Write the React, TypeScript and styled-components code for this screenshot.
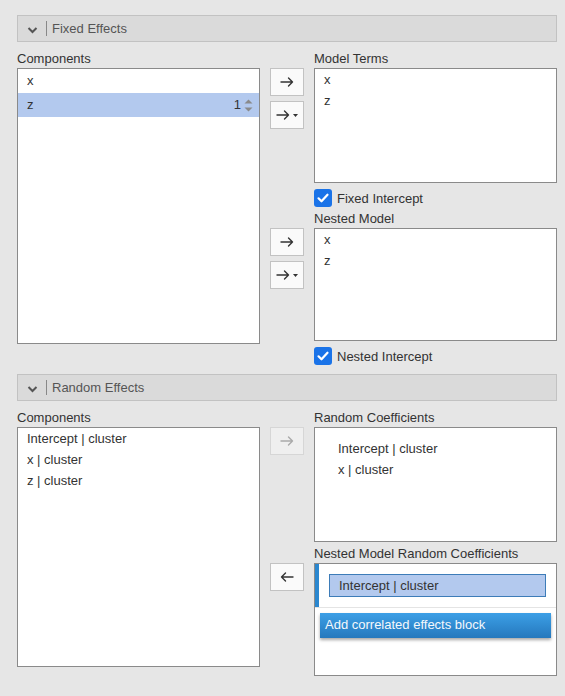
import React from "react";
import styled, { createGlobalStyle } from "styled-components";

const GlobalStyle = createGlobalStyle`
  html, body {
    margin: 0;
    padding: 0;
    background: #e6e6e6;
    font-family: "Liberation Sans", Arial, sans-serif;
    font-size: 13px;
    color: #333;
  }
`;

const Page = styled.div`
  width: 540px;
  padding: 15px 0 0 17px;
`;

const Section = styled.section`
  display: flex;
  flex-direction: column;
  & + & {
    margin-top: 8px;
  }
`;

const SectionHeader = styled.div`
  height: 25px;
  display: flex;
  align-items: center;
  background: #dadada;
  border: 1px solid #c2c2c2;
  color: #555;
  font-size: 13px;
`;

const Chevron = styled.div`
  width: 27px;
  display: flex;
  justify-content: center;
  padding-left: 1px;
  padding-top: 3px;
`;

const Divider = styled.div`
  width: 1px;
  height: 15px;
  background: #888;
  margin-right: 5px;
`;

const Body = styled.div<{ $top: number }>`
  display: grid;
  grid-template-columns: 243px 34px 243px;
  column-gap: 10px;
  padding-top: ${(p) => p.$top}px;
  align-items: start;
`;

const Column = styled.div`
  display: flex;
  flex-direction: column;
`;

const Label = styled.div`
  height: 18px;
  line-height: 18px;
  color: #333;
`;

const ListBox = styled.div<{ $h: number }>`
  height: ${(p) => p.$h}px;
  box-sizing: border-box;
  background: #fff;
  border: 1px solid #8a8a8a;
  display: flex;
  flex-direction: column;
  overflow: hidden;
`;

const Item = styled.div<{ $h?: number; $selected?: boolean }>`
  height: ${(p) => p.$h ?? 21}px;
  line-height: ${(p) => p.$h ?? 21}px;
  padding: 0 9px;
  display: flex;
  align-items: center;
  background: ${(p) => (p.$selected ? "#b3c9ee" : "transparent")};
  color: #333;
`;

const ItemText = styled.span`
  flex: 1;
`;

const Spinner = styled.div`
  display: flex;
  align-items: center;
  gap: 3px;
  margin-right: -3px;
`;

const ButtonStack = styled.div<{ $top: number }>`
  display: flex;
  flex-direction: column;
  gap: 5px;
  margin-top: ${(p) => p.$top}px;
`;

const ArrowButton = styled.button<{ $disabled?: boolean }>`
  width: 34px;
  height: 28px;
  box-sizing: border-box;
  padding: 0;
  display: flex;
  align-items: center;
  justify-content: center;
  gap: 3px;
  background: ${(p) => (p.$disabled ? "#efefef" : "#fafafa")};
  border: 1px solid ${(p) => (p.$disabled ? "#d6d6d6" : "#c2c2c2")};
  color: ${(p) => (p.$disabled ? "#aaa" : "#333")};
  border-radius: 0;
`;

const CheckRow = styled.label`
  height: 20px;
  margin-top: 5px;
  display: flex;
  align-items: center;
  gap: 5px;
  color: #333;
`;

const CheckBox = styled.span`
  width: 18px;
  height: 18px;
  border-radius: 3px;
  background: #1a73e8;
  display: flex;
  align-items: center;
  justify-content: center;
`;

const Block = styled.div<{ $active?: boolean }>`
  padding: 10px;
  border-left: 4px solid ${(p) => (p.$active ? "#2b87cf" : "transparent")};
  display: flex;
  flex-direction: column;
`;

const BlockItem = styled.div<{ $selected?: boolean }>`
  height: 21px;
  line-height: 21px;
  padding: 0 9px;
  box-sizing: border-box;
  color: #333;
  ${(p) =>
    p.$selected &&
    `
    height: 23px;
    line-height: 21px;
    background: #b3c9ee;
    border: 1px solid #3d7cb8;
  `}
`;

const Separator = styled.div`
  height: 1px;
  background: #e4e4e4;
`;

const AddBlockButton = styled.div`
  margin: 5px 5px 0 5px;
  height: 25px;
  line-height: 24px;
  padding: 0 5px;
  color: #f4f8fc;
  background: linear-gradient(#3c9fe6, #2578bd);
  box-shadow: 0 2px 3px rgba(0, 0, 0, 0.35);
`;

const Arrow = ({ left }: { left?: boolean }) => (
  <svg width="14" height="10" viewBox="0 0 14 10" fill="none">
    <path
      d={left ? "M13 5H1.5M5.5 1L1.5 5l4 4" : "M1 5h11.5M8.5 1l4 4-4 4"}
      stroke="currentColor"
      strokeWidth="1.4"
      strokeLinecap="round"
      strokeLinejoin="round"
    />
  </svg>
);

const Caret = () => (
  <svg width="5" height="3" viewBox="0 0 5 3">
    <path d="M0 0h5L2.5 3z" fill="#333" />
  </svg>
);

const Check = () => (
  <svg width="14" height="14" viewBox="0 0 14 14" fill="none">
    <path
      d="M2.5 7.3l3 3 6-6.6"
      stroke="#fff"
      strokeWidth="2.2"
      strokeLinecap="round"
      strokeLinejoin="round"
    />
  </svg>
);

const ChevronIcon = () => (
  <svg width="11" height="8" viewBox="0 0 11 8" fill="none">
    <path d="M1.5 2l4 4 4-4" stroke="#555" strokeWidth="2" />
  </svg>
);

const SpinArrows = () => (
  <svg width="9" height="13" viewBox="0 0 9 13">
    <path d="M0.5 4.5L4.5 0.5 8.5 4.5z" fill="#8a8a8a" />
    <path d="M0.5 8.5L4.5 12.5 8.5 8.5z" fill="#8a8a8a" />
  </svg>
);

const Header = ({ title }: { title: string }) => (
  <SectionHeader>
    <Chevron>
      <ChevronIcon />
    </Chevron>
    <Divider />
    {title}
  </SectionHeader>
);

const SplitButton = () => (
  <ArrowButton>
    <Arrow />
    <Caret />
  </ArrowButton>
);

export default function App() {
  return (
    <Page>
      <GlobalStyle />
      <Section>
        <Header title="Fixed Effects" />
        <Body $top={8}>
          <Column>
            <Label>Components</Label>
            <ListBox $h={276}>
              <Item $h={24}>
                <ItemText>x</ItemText>
              </Item>
              <Item $h={24} $selected>
                <ItemText>z</ItemText>
                <Spinner>
                  1
                  <SpinArrows />
                </Spinner>
              </Item>
            </ListBox>
          </Column>
          <Column>
            <ButtonStack $top={18}>
              <ArrowButton>
                <Arrow />
              </ArrowButton>
              <SplitButton />
            </ButtonStack>
            <ButtonStack $top={99}>
              <ArrowButton>
                <Arrow />
              </ArrowButton>
              <SplitButton />
            </ButtonStack>
          </Column>
          <Column>
            <Label>Model Terms</Label>
            <ListBox $h={115}>
              <Item>x</Item>
              <Item>z</Item>
            </ListBox>
            <CheckRow>
              <CheckBox>
                <Check />
              </CheckBox>
              Fixed Intercept
            </CheckRow>
            <Label style={{ marginTop: 2 }}>Nested Model</Label>
            <ListBox $h={113}>
              <Item>x</Item>
              <Item>z</Item>
            </ListBox>
            <CheckRow>
              <CheckBox>
                <Check />
              </CheckBox>
              Nested Intercept
            </CheckRow>
          </Column>
        </Body>
      </Section>
      <Section>
        <Header title="Random Effects" />
        <Body $top={8}>
          <Column>
            <Label>Components</Label>
            <ListBox $h={240}>
              <Item>Intercept | cluster</Item>
              <Item>x | cluster</Item>
              <Item>z | cluster</Item>
            </ListBox>
          </Column>
          <Column>
            <ButtonStack $top={18}>
              <ArrowButton $disabled>
                <Arrow />
              </ArrowButton>
            </ButtonStack>
            <ButtonStack $top={108}>
              <ArrowButton>
                <Arrow left />
              </ArrowButton>
            </ButtonStack>
          </Column>
          <Column>
            <Label>Random Coefficients</Label>
            <ListBox $h={115}>
              <Block>
                <BlockItem>Intercept | cluster</BlockItem>
                <BlockItem>x | cluster</BlockItem>
              </Block>
            </ListBox>
            <Label style={{ marginTop: 3 }}>
              Nested Model Random Coefficients
            </Label>
            <ListBox $h={113}>
              <Block $active>
                <BlockItem $selected>Intercept | cluster</BlockItem>
              </Block>
              <Separator />
              <AddBlockButton>Add correlated effects block</AddBlockButton>
            </ListBox>
          </Column>
        </Body>
      </Section>
    </Page>
  );
}
